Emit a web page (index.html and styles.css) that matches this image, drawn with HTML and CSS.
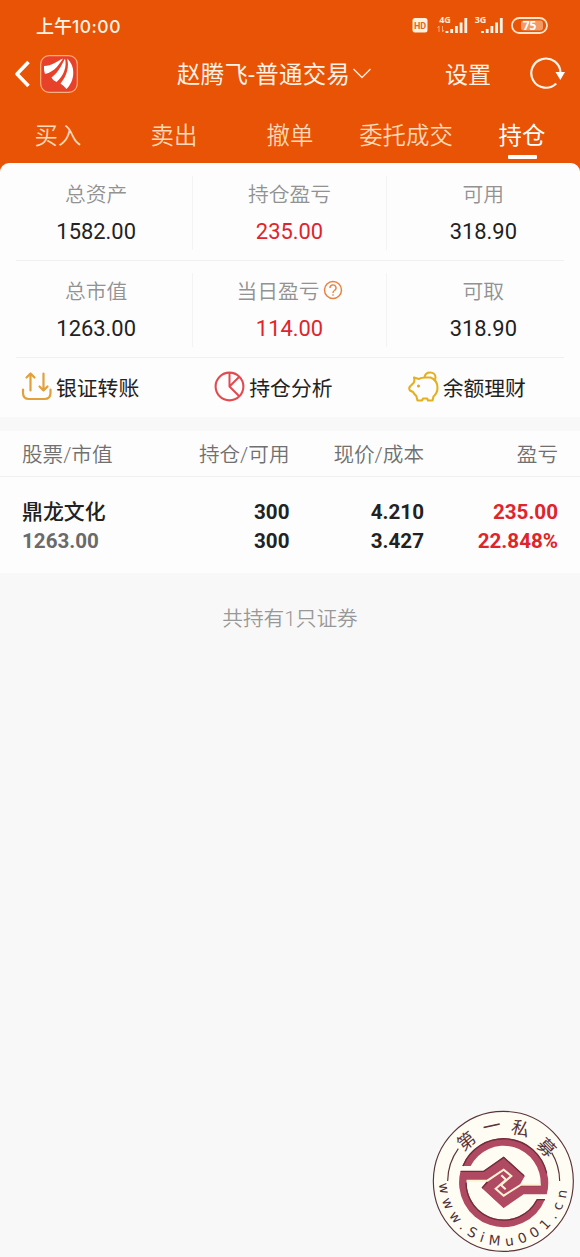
FILE: index.html
```html
<!DOCTYPE html>
<html lang="zh-CN">
<head>
    <meta charset="UTF-8">
    <meta name="viewport" content="width=device-width, initial-scale=1.0">
    <title>持仓</title>
    <link rel="stylesheet" href="styles.css">
</head>
<body>
    <header class="header">
        <!-- 状态栏 -->
        <div class="status-bar">
            <span class="time">上午<b>10:00</b></span>
            <svg class="status-icons" width="140" height="24" viewBox="0 0 140 24">
                <rect x="3.500" y="5" width="15" height="14.500" rx="2.500" fill="#fff0e0"/>
                <text x="11" y="15.800" class="hd">HD</text>
                <text x="36" y="10" class="net">4G</text>
                <path d="M30 13v6M28.500 15l1.500-2M33.500 13v6M35 17l-1.500 2" stroke="#f5a878" stroke-width="1" fill="none"/>
                <path d="M2 20v-2M6.700 20v-4M11.400 20v-7M16.100 20v-10.500M20.800 20v-15" transform="translate(36 0)" class="bars"/>
                <text x="71.500" y="10" class="net">3G</text>
                <path d="M2 20v-2M6.700 20v-4M11.400 20v-7M16.100 20v-10.500M20.800 20v-15" transform="translate(71.500 0)" class="bars"/>
                <rect x="103" y="5" width="35" height="15" rx="7.500" fill="none" stroke="#ffe3c8" stroke-width="1.800"/>
                <rect x="112" y="7.500" width="22" height="10" rx="3" fill="#f39a67"/>
                <text x="120.500" y="16.800" class="battery">75</text>
            </svg>
        </div>

        <!-- 标题栏 -->
        <div class="title-bar">
            <div class="title-left">
                <svg width="18" height="30" viewBox="0 0 18 30">
                    <path d="M15.500 3L4 15l11.500 12" fill="none" stroke="#fff" stroke-width="3.600" stroke-linejoin="round"/>
                </svg>
                <svg class="logo" width="38" height="38" viewBox="0 0 38 38">
                    <rect x=".7" y=".7" width="36.600" height="36.600" rx="8.500" fill="#e8412a" stroke="#f9b07c" stroke-width="1.200"/>
                    <path d="M4 11C12 11 17 6 23 3.500C20 8 15 17 5 19Q3.500 15 4 11Z" fill="#fff"/>
                    <path d="M25 3.500C22 9 19 17 11.500 22.500Q13 26 16.500 27C24 21 27 11 25 3.500Z" fill="#fff"/>
                    <path d="M27 3.500C29.500 11 27 21 20.500 28.500Q24 31 26.500 34C35 26 36 11 27 3.500Z" fill="#fff"/>
                </svg>
            </div>
            <div class="title">
                <span>赵腾飞-普通交易</span>
                <svg width="20" height="14" viewBox="0 0 20 14">
                    <path d="M1.500 2l8.500 8.500 8.500-8.500" fill="none" stroke="#ffe9d6" stroke-width="1.500"/>
                </svg>
            </div>
            <div class="title-right">
                <span>设置</span>
                <svg width="38" height="34" viewBox="0 0 38 34">
                    <path d="M28.200 26.500A14.600 14.600 0 1 1 32.500 16" fill="none" stroke="#fff3e8" stroke-width="2.200"/>
                    <path d="M27.500 15h9.500l-4.700 8z" fill="#fff"/>
                </svg>
            </div>
        </div>

        <nav class="tabs">
            <a class="tab">买入</a>
            <a class="tab">卖出</a>
            <a class="tab">撤单</a>
            <a class="tab">委托成交</a>
            <a class="tab active">持仓</a>
        </nav>
    </header>

    <!-- 资产汇总 -->
    <section class="summary-wrap">
        <div class="summary">
            <div class="summary-row">
                <div class="cell"><span class="label">总资产</span><span class="value">1582.00</span></div>
                <div class="cell"><span class="label">持仓盈亏</span><span class="value red">235.00</span></div>
                <div class="cell"><span class="label">可用</span><span class="value">318.90</span></div>
            </div>
            <div class="summary-row">
                <div class="cell"><span class="label">总市值</span><span class="value">1263.00</span></div>
                <div class="cell">
                    <span class="label">当日盈亏<svg class="help" width="20" height="20" viewBox="0 0 20 20"><circle cx="10" cy="10" r="8.500" fill="none" stroke="#e58544" stroke-width="1.500"/><path d="M7 8a3 3 0 1 1 4.500 2.500Q10 11.300 10 13M10 14.200v1.500" fill="none" stroke="#e58544" stroke-width="1.400"/></svg></span>
                    <span class="value red">114.00</span>
                </div>
                <div class="cell"><span class="label">可取</span><span class="value">318.90</span></div>
            </div>
            <div class="actions">
                <div class="action">
                    <svg width="32" height="32" viewBox="0 0 32 32">
                        <g fill="none" stroke="#e2a03c" stroke-width="2.200" stroke-linecap="round" stroke-linejoin="round">
                            <path d="M9.500 19.500V2.500M5.500 6.500l4-4 4 4M22.500 2.500v17M18.500 15.500l4 4 4-4"/>
                            <path d="M2 18.500v3.500q0 6 6 6h15.500q6 0 6-6v-3.500"/>
                        </g>
                    </svg>
                    <span>银证转账</span>
                </div>
                <div class="action">
                    <svg width="32" height="32" viewBox="0 0 32 32">
                        <path d="M15.500 1.500v14L25 25M15.500 15.500l9.500-9.500" fill="none" stroke="#e14b50" stroke-width="2"/>
                        <circle cx="15.500" cy="15.500" r="13.900" fill="none" stroke="#e14b50" stroke-width="2.100"/>
                    </svg>
                    <span>持仓分析</span>
                </div>
                <div class="action">
                    <svg width="32" height="32" viewBox="0 0 32 32">
                        <g fill="none" stroke="#e5b020" stroke-width="2.100" stroke-linejoin="round">
                            <path d="M6 6.500l5 1.500Q13 6.500 18 6.500h4.500Q29.500 9 29.500 17q0 5-4 8.500l-1 4h-4.500l-.8-2h-4.200l-1 2H9.500l-1.200-4.500Q6 23 5 21l-3-1.500q-1.500-2 0-4l3.500-3.500q1.500-2 .5-5.500z"/>
                            <path d="M16.500 6.500C17.500-.5 27.500 0 27.500 6.500q0 2.500-1.500 3.500"/>
                        </g>
                        <circle cx="10.500" cy="15" r="1.500" fill="#e5a020"/>
                    </svg>
                    <span>余额理财</span>
                </div>
            </div>
        </div>
    </section>

    <!-- 持仓列表 -->
    <section class="holdings">
        <div class="row head">
            <span>股票/市值</span>
            <span>持仓/可用</span>
            <span>现价/成本</span>
            <span>盈亏</span>
        </div>
        <div class="row stock">
            <div><span class="name">鼎龙文化</span><span class="gray">1263.00</span></div>
            <div><span>300</span><span>300</span></div>
            <div><span>4.210</span><span>3.427</span></div>
            <div class="red"><span>235.00</span><span>22.848%</span></div>
        </div>
    </section>

    <p class="total">共持有1只证券</p>

    <!-- 印章 -->
    <svg class="stamp" width="155" height="157" viewBox="0 0 465 471">
        <defs>
            <path id="ring-text" d="M43 250A192 192 0 0 0 428 240L424 190"/>
        </defs>
        <circle cx="235" cy="244" r="210" fill="#fffdf3" stroke="#5b3438" stroke-width="3.500"/>
        <path d="M68 243A168 168 0 0 1 100 146M380 158A168 168 0 0 1 404 243" fill="none" stroke="#5b3438" stroke-width="3.500"/>
        <g fill="#b04a63">
            <path d="M106.700 213H176L236 170L299 228L236 324L171 264L188 240H125.300A111 111 0 0 0 335 298H360.300A134 134 0 0 1 106.700 213Z"/>
            <path d="M365.300 283H296L236 324L171 264L236 172L299 228L284 256H346.700A111 111 0 0 0 137 198H111.700A134 134 0 0 1 365.300 283Z"/>
        </g>
        <!-- 上沿阴影 -->
        <g fill="none" stroke="#6f2d3c" stroke-width="4">
            <path d="M107 214H176L236 172L297 227M114 198A132 132 0 0 1 365 220M284 257H346M335 299H360M171 264L188 246"/>
            <path d="M123 248A113 113 0 0 0 336 300"/>
        </g>
        <g fill="none" stroke="#fff4d2" stroke-width="6">
            <path d="M125 242H187L236 209L259 228L228 255L242 268"/>
            <path d="M347 254H288L236 287L212 266L243 239L229 226"/>
        </g>
        <g class="stamp-cn">
            <text transform="translate(124 124) rotate(-38)" y="19">第</text>
            <text transform="translate(200 79) rotate(-12)" y="19">一</text>
            <text transform="translate(287 86) rotate(15)" y="19">私</text>
            <text transform="translate(364 143) rotate(45)" y="19">募</text>
        </g>
        <text class="stamp-url"><textPath href="#ring-text">www.SiMu001.cn</textPath></text>
    </svg>
</body>
</html>
```
FILE: styles.css
```css
body {
    font-family: Roboto, "Noto Sans CJK SC", sans-serif;
    background-color: #f8f8f8;
    margin: 0;
    min-height: 1257px;
    position: relative;
    color: #222;
}

.header {
    background-color: #e85305;
    height: 163px;
    color: #fff3e6;
}

.status-bar {
    display: flex;
    justify-content: space-between;
    align-items: center;
    height: 50px;
    padding: 0 31px 0 36px;
}

.time {
    font-size: 18px;
    font-weight: 500;
}

.time b {
    font-family: Inter, sans-serif;
    font-size: 17.5px;
    font-weight: 500;
    letter-spacing: 0.5px;
}

.hd {
    font: bold 9px Roboto, sans-serif;
    fill: #e0662c;
    text-anchor: middle;
}

.net {
    font: bold 9px "Open Sans", sans-serif;
    fill: #ffe9d4;
    text-anchor: middle;
}

.bars {
    stroke: #fff3e6;
    stroke-width: 2.8;
    fill: none;
}

.battery {
    font: bold 12px "Open Sans", sans-serif;
    fill: #fff;
    text-anchor: middle;
}

.title-bar {
    display: grid;
    grid-template-columns: 150px 1fr 150px;
    align-items: center;
    height: 48px;
    font-size: 23px;
}

.title-left,
.title,
.title-right {
    display: flex;
    align-items: center;
}

.title-left {
    padding-left: 13px;
}

.logo {
    margin-left: 9px;
}

.title {
    padding-left: 27px;
    gap: 2px;
    font-size: 23.4px;
    letter-spacing: 0.4px;
    line-height: 30px;
    white-space: nowrap;
}

.title span {
    margin-top: 1px;
}

.title-right span {
    margin-top: -3px;
}

.title-right {
    justify-content: space-between;
    padding: 0 14px 0 15px;
}

.tabs {
    display: grid;
    grid-template-columns: repeat(5, 1fr);
    height: 65px;
}

.tab {
    display: flex;
    flex-direction: column;
    align-items: center;
    font-size: 23.4px;
    font-weight: 350;
    line-height: 34px;
    padding-top: 21px;
    color: #ffd9b8;
}

.tab.active {
    color: #fff;
    font-weight: 400;
}

.tab.active::after {
    content: "";
    width: 29px;
    height: 4px;
    margin-top: 2px;
    border-radius: 1px;
    background-color: #fff;
}

.summary-wrap {
    background: linear-gradient(#e85305 20px, #fdfdfd 20px);
}

.summary {
    background-color: #fdfdfd;
    border-radius: 9px 9px 0 0;
    height: 253px;
    padding-top: 1px;
}

.summary-row {
    display: grid;
    grid-template-columns: repeat(3, 1fr);
    height: 97px;
    background: linear-gradient(#f0f0f0, #f0f0f0) center bottom / 548px 1px no-repeat;
}

.cell {
    display: flex;
    flex-direction: column;
    align-items: center;
    margin: 12px 0 12px;
    border-right: 1px solid #f3f3f3;
}

.cell:last-child {
    border-right: none;
}

.label {
    display: flex;
    align-items: center;
    font-size: 20.8px;
    font-weight: 350;
    line-height: 38px;
    color: #929292;
}

.help {
    margin: -4px 0 0 3px;
}

.value {
    font-size: 21.9px;
    line-height: 36px;
}

.red {
    color: #e0242c;
}

.actions {
    display: grid;
    grid-template-columns: repeat(3, 1fr);
    height: 57px;
}

.action {
    display: flex;
    align-items: center;
    gap: 3px;
    padding-left: 21px;
    font-size: 20.8px;
    color: #222;
}

.holdings {
    background-color: #fdfdfd;
    margin-top: 14px;
}

.row {
    display: grid;
    grid-template-columns: 133px 134.5px 134.5px 134px;
    padding: 0 22px;
    text-align: right;
    font-size: 20.6px;
}

.row > :first-child {
    text-align: left;
}

.head {
    height: 45px;
    line-height: 49px;
    font-weight: 350;
    color: #707070;
    border-bottom: 1px solid #f0f0f0;
}

.stock {
    height: 75px;
    padding-top: 21px;
    font-weight: 700;
}

.stock span {
    display: block;
    line-height: 28.6px;
}

.stock .name {
    font-size: 20.9px;
    font-weight: 500;
}

.gray {
    color: #6a6a6a;
}

.total {
    margin: 31px 0 0;
    text-align: center;
    font-size: 20.7px;
    font-weight: 350;
    line-height: 30px;
    color: #989898;
}

/* 印章浮在页面右下角 */
.stamp {
    position: absolute;
    right: 0;
    bottom: 0;
}

.stamp-cn {
    font: 400 54px "Noto Sans CJK SC", sans-serif;
    fill: #5b3438;
    text-anchor: middle;
}

.stamp-url {
    font: 400 41px "DejaVu Sans", sans-serif;
    letter-spacing: 17.3px;
    fill: #4f3034;
}
```
